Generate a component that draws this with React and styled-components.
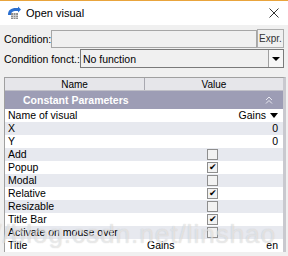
import React from "react"
import styled, { createGlobalStyle } from "styled-components"

const Global = createGlobalStyle`
    html, body {
        margin: 0;
        padding: 0;
    }
    body {
        width: 288px;
        height: 256px;
        overflow: hidden;
        background-color: #f0f0f0;
        font-family: 'Liberation Sans', Arial, sans-serif;
        font-size: 10.5px;
        color: #000000;
    }
`

const Window = styled.div`
    position: relative;
    width: 288px;
    height: 256px;
    display: flex;
    flex-direction: column;
    background-color: #f0f0f0;
    overflow: hidden;
`

const TitleBar = styled.div`
    height: 24px;
    background-color: #ffffff;
    border-top: 1px solid #e9a43c;
    display: flex;
    align-items: center;
    padding: 0 9px 0 6px;
    gap: 5px;
    font-size: 11px;
    span{
        flex: 1;
    }
`

const Form = styled.div`
    display: flex;
    flex-direction: column;
    padding: 4px 4px 0 4px;
    gap: 1px;
`

const FieldRow = styled.div`
    display: flex;
    align-items: center;
    height: 19px;
    label{
        white-space: nowrap;
    }
`

const TextInput = styled.div`
    flex: 1;
    height: 16px;
    border: 1px solid #a6a6a6;
    background-color: #f0f0f0;
`

const Button = styled.div`
    width: 25px;
    height: 17px;
    border: 1px solid #adadad;
    background-color: #f0f0f0;
    display: flex;
    align-items: center;
    justify-content: center;
    font-size: 10px;
    color: #333333;
`

const Select = styled.div`
    flex: 1;
    height: 17px;
    border: 1px solid #7a7a7a;
    background-color: #f0f0f0;
    display: flex;
    align-items: center;
    padding-left: 2px;
    span{
        flex: 1;
    }
`

const SelectArrow = styled.div`
    width: 14px;
    height: 17px;
    border-left: 1px solid #a0a0a0;
    background-color: #f6f6f6;
    display: flex;
    align-items: center;
    justify-content: center;
    &::after{
        content: "";
        border-left: 4px solid transparent;
        border-right: 4px solid transparent;
        border-top: 4px solid #000000;
    }
`

const Table = styled.div`
    margin: 9px 0 0 4px;
    width: 278px;
    border-left: 1px solid #a0a0a0;
    border-top: 1px solid #a0a0a0;
    border-right: 3px solid #c9c9cf;
    display: flex;
    flex-direction: column;
`

const HeaderRow = styled.div`
    display: grid;
    grid-template-columns: 139px 1fr;
    height: 12px;
    background-color: #e6e6ea;
    border-bottom: 1px solid #c0c0c8;
    div{
        display: flex;
        align-items: center;
        justify-content: center;
        font-size: 10px;
    }
    div + div{
        border-left: 1px solid #a8a8b0;
    }
`

const SectionRow = styled.div`
    height: 18px;
    background-color: #9d9db5;
    display: flex;
    align-items: center;
    padding: 0 0 0 18px;
    color: #ffffff;
    font-weight: 700;
    font-size: 10.5px;
    span{
        flex: 1;
    }
`

const Chevron = styled.svg`
    width: 8px;
    height: 8px;
    margin-right: 10px;
`

const DataRow = styled.div`
    display: grid;
    grid-template-columns: 139px 1fr;
    height: 13px;
    background-color: ${(p) => (p.alt ? "#e7e9ef" : "#ffffff")};
    line-height: 13px;
`

const NameCell = styled.div`
    padding-left: 3px;
    white-space: nowrap;
    overflow: hidden;
`

const ValueCell = styled.div`
    display: flex;
    align-items: center;
    justify-content: ${(p) => p.align || "flex-end"};
    padding: 0 5px 0 3px;
    gap: 4px;
`

const Checkbox = styled.div`
    width: 9px;
    height: 9px;
    border: 1px solid #8e8e8e;
    background-color: #f2f2f2;
    display: flex;
    align-items: center;
    justify-content: center;
    font-size: 9px;
    line-height: 9px;
`

const DownTri = styled.span`
    border-left: 4px solid transparent;
    border-right: 4px solid transparent;
    border-top: 5px solid #000000;
`

const Watermark = styled.div`
    position: absolute;
    right: 12px;
    top: 219px;
    font-size: 26px;
    color: rgba(255, 255, 255, 0.5);
    text-shadow: 0 0 1px rgba(130, 130, 130, 0.4);
    letter-spacing: 1px;
    pointer-events: none;
    white-space: nowrap;
`

const rows = [
    { name: "Name of visual", kind: "select", value: "Gains" },
    { name: "X", kind: "text", value: "0" },
    { name: "Y", kind: "text", value: "0" },
    { name: "Add", kind: "check", value: false },
    { name: "Popup", kind: "check", value: true },
    { name: "Modal", kind: "check", value: false },
    { name: "Relative", kind: "check", value: true },
    { name: "Resizable", kind: "check", value: false },
    { name: "Title Bar", kind: "check", value: true },
    { name: "Activate on mouse over", kind: "check", value: false },
    { name: "Title", kind: "title", value: "Gains" },
]

function AppIcon() {
    return (
        <svg width="15" height="14" viewBox="0 0 15 14">
            <path d="M2 9 C2 4 5 2 10 2 L12 2 L12 0.5 L15 3.5 L12 6.5 L12 5 L10 5 C7 5 5 6 5 9 Z" fill="#2a6fd0" />
            <rect x="5" y="7" width="7" height="6" fill="#8c8c8c" />
            <path d="M5 9.5 H12 M5 11.5 H12 M7.5 7 V13 M9.7 7 V13" stroke="#d8d8d8" strokeWidth="0.8" />
        </svg>
    )
}

function CloseIcon() {
    return (
        <svg width="10" height="10" viewBox="0 0 10 10">
            <path d="M0.5 0.5 L9.5 9.5 M9.5 0.5 L0.5 9.5" stroke="#333333" strokeWidth="1" />
        </svg>
    )
}

function Value({ row }) {
    if (row.kind === "check") {
        return (
            <ValueCell align="center">
                <Checkbox>{row.value ? "✔" : ""}</Checkbox>
            </ValueCell>
        )
    }
    if (row.kind === "select") {
        return (
            <ValueCell>
                {row.value}
                <DownTri />
            </ValueCell>
        )
    }
    if (row.kind === "title") {
        return (
            <ValueCell align="space-between">
                <span>{row.value}</span>
                <span>en</span>
            </ValueCell>
        )
    }
    return <ValueCell>{row.value}</ValueCell>
}

export default function App() {
    return (
        <Window>
            <Global />
            <TitleBar>
                <AppIcon />
                <span>Open visual</span>
                <CloseIcon />
            </TitleBar>
            <Form>
                <FieldRow>
                    <label>Condition:</label>
                    <TextInput />
                    <Button>Expr.</Button>
                </FieldRow>
                <FieldRow>
                    <label>Condition fonct.:</label>
                    <Select>
                        <span>No function</span>
                        <SelectArrow />
                    </Select>
                </FieldRow>
            </Form>
            <Table>
                <HeaderRow>
                    <div>Name</div>
                    <div>Value</div>
                </HeaderRow>
                <SectionRow>
                    <span>Constant Parameters</span>
                    <Chevron viewBox="0 0 8 8">
                        <path d="M1 4 L4 1 L7 4 M1 7.5 L4 4.5 L7 7.5" stroke="#e8e8f0" strokeWidth="1" fill="none" />
                    </Chevron>
                </SectionRow>
                {rows.map((row, i) => (
                    <DataRow key={row.name} alt={i % 2 === 1}>
                        <NameCell>{row.name}</NameCell>
                        <Value row={row} />
                    </DataRow>
                ))}
            </Table>
            <Watermark>//blog.csdn.net/linshao</Watermark>
        </Window>
    )
}
